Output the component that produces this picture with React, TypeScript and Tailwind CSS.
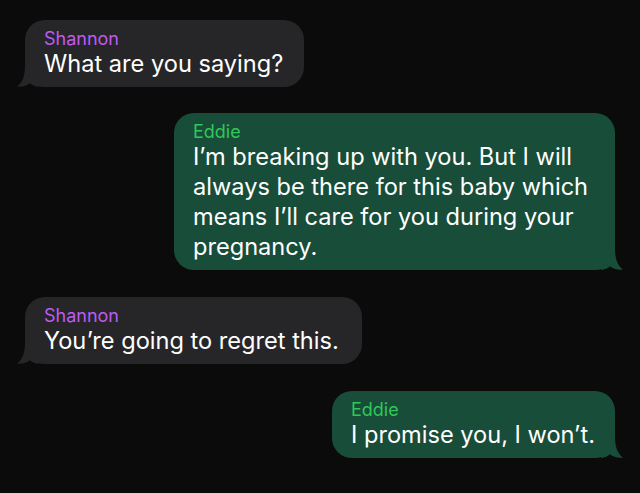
import type { ReactNode } from "react";

type Side = "left" | "right";

function Tail({ side, color }: { side: Side; color: string }) {
  if (side === "left") {
    return (
      <svg
        className="absolute -left-[8px] bottom-0 w-[22px] h-[22px]"
        viewBox="0 0 22 22"
        aria-hidden="true"
      >
        <path d="M8 0 C8 11 5.5 17.5 0 21.6 C5 22.4 10 20.8 13 18.2 C15.5 20.4 18 21.6 22 22 L22 0 Z" fill={color} />
      </svg>
    );
  }
  return (
    <svg
      className="absolute -right-[8px] bottom-0 w-[22px] h-[22px]"
      viewBox="0 0 22 22"
      aria-hidden="true"
    >
      <path d="M14 0 C14 11 16.5 17.5 22 21.6 C17 22.4 12 20.8 9 18.2 C6.5 20.4 4 21.6 0 22 L0 0 Z" fill={color} />
    </svg>
  );
}

function Bubble({
  side,
  name,
  width,
  extra = "",
  children,
}: {
  side: Side;
  name: string;
  width: string;
  extra?: string;
  children: ReactNode;
}) {
  const left = side === "left";
  const color = left ? "#262629" : "#184d3a";
  return (
    <div
      className={
        left
          ? `relative self-start ml-[25px] ${width} ${extra} rounded-[20px] bg-[#262629] pl-[19px] pr-4 pt-2 pb-2`
          : `relative self-end mr-[25px] ${width} ${extra} rounded-[20px] bg-[#184d3a] pl-[19px] pr-4 pt-2 pb-2`
      }
    >
      <Tail side={side} color={color} />
      <div className="relative">
        <p
          className={
            left
              ? "text-[18px] leading-[21px] text-[#bf5af2]"
              : "text-[18px] leading-[21px] text-[#30c758]"
          }
        >
          {name}
        </p>
        <p className="text-[23.6px] leading-[30px] text-white whitespace-nowrap">{children}</p>
      </div>
    </div>
  );
}

export default function App() {
  return (
    <div
      className="w-[640px] h-[493px] bg-[#0b0b0b] flex flex-col gap-[26px] pt-5 overflow-hidden"
      style={{ fontFamily: "Inter, 'Liberation Sans', sans-serif" }}
    >
      <Bubble side="left" name="Shannon" width="w-[279px]">
        What are you saying?
      </Bubble>

      <Bubble side="right" name="Eddie" width="w-[441px]">
        I’m breaking up with you. But I will
        <br />
        always be there for this baby which
        <br />
        means I’ll care for you during your
        <br />
        pregnancy.
      </Bubble>

      <Bubble side="left" name="Shannon" width="w-[337px]" extra="mt-px">
        You’re going to regret this.
      </Bubble>

      <Bubble side="right" name="Eddie" width="w-[283px]" extra="mt-px">
        I promise you, I won’t.
      </Bubble>
    </div>
  );
}
